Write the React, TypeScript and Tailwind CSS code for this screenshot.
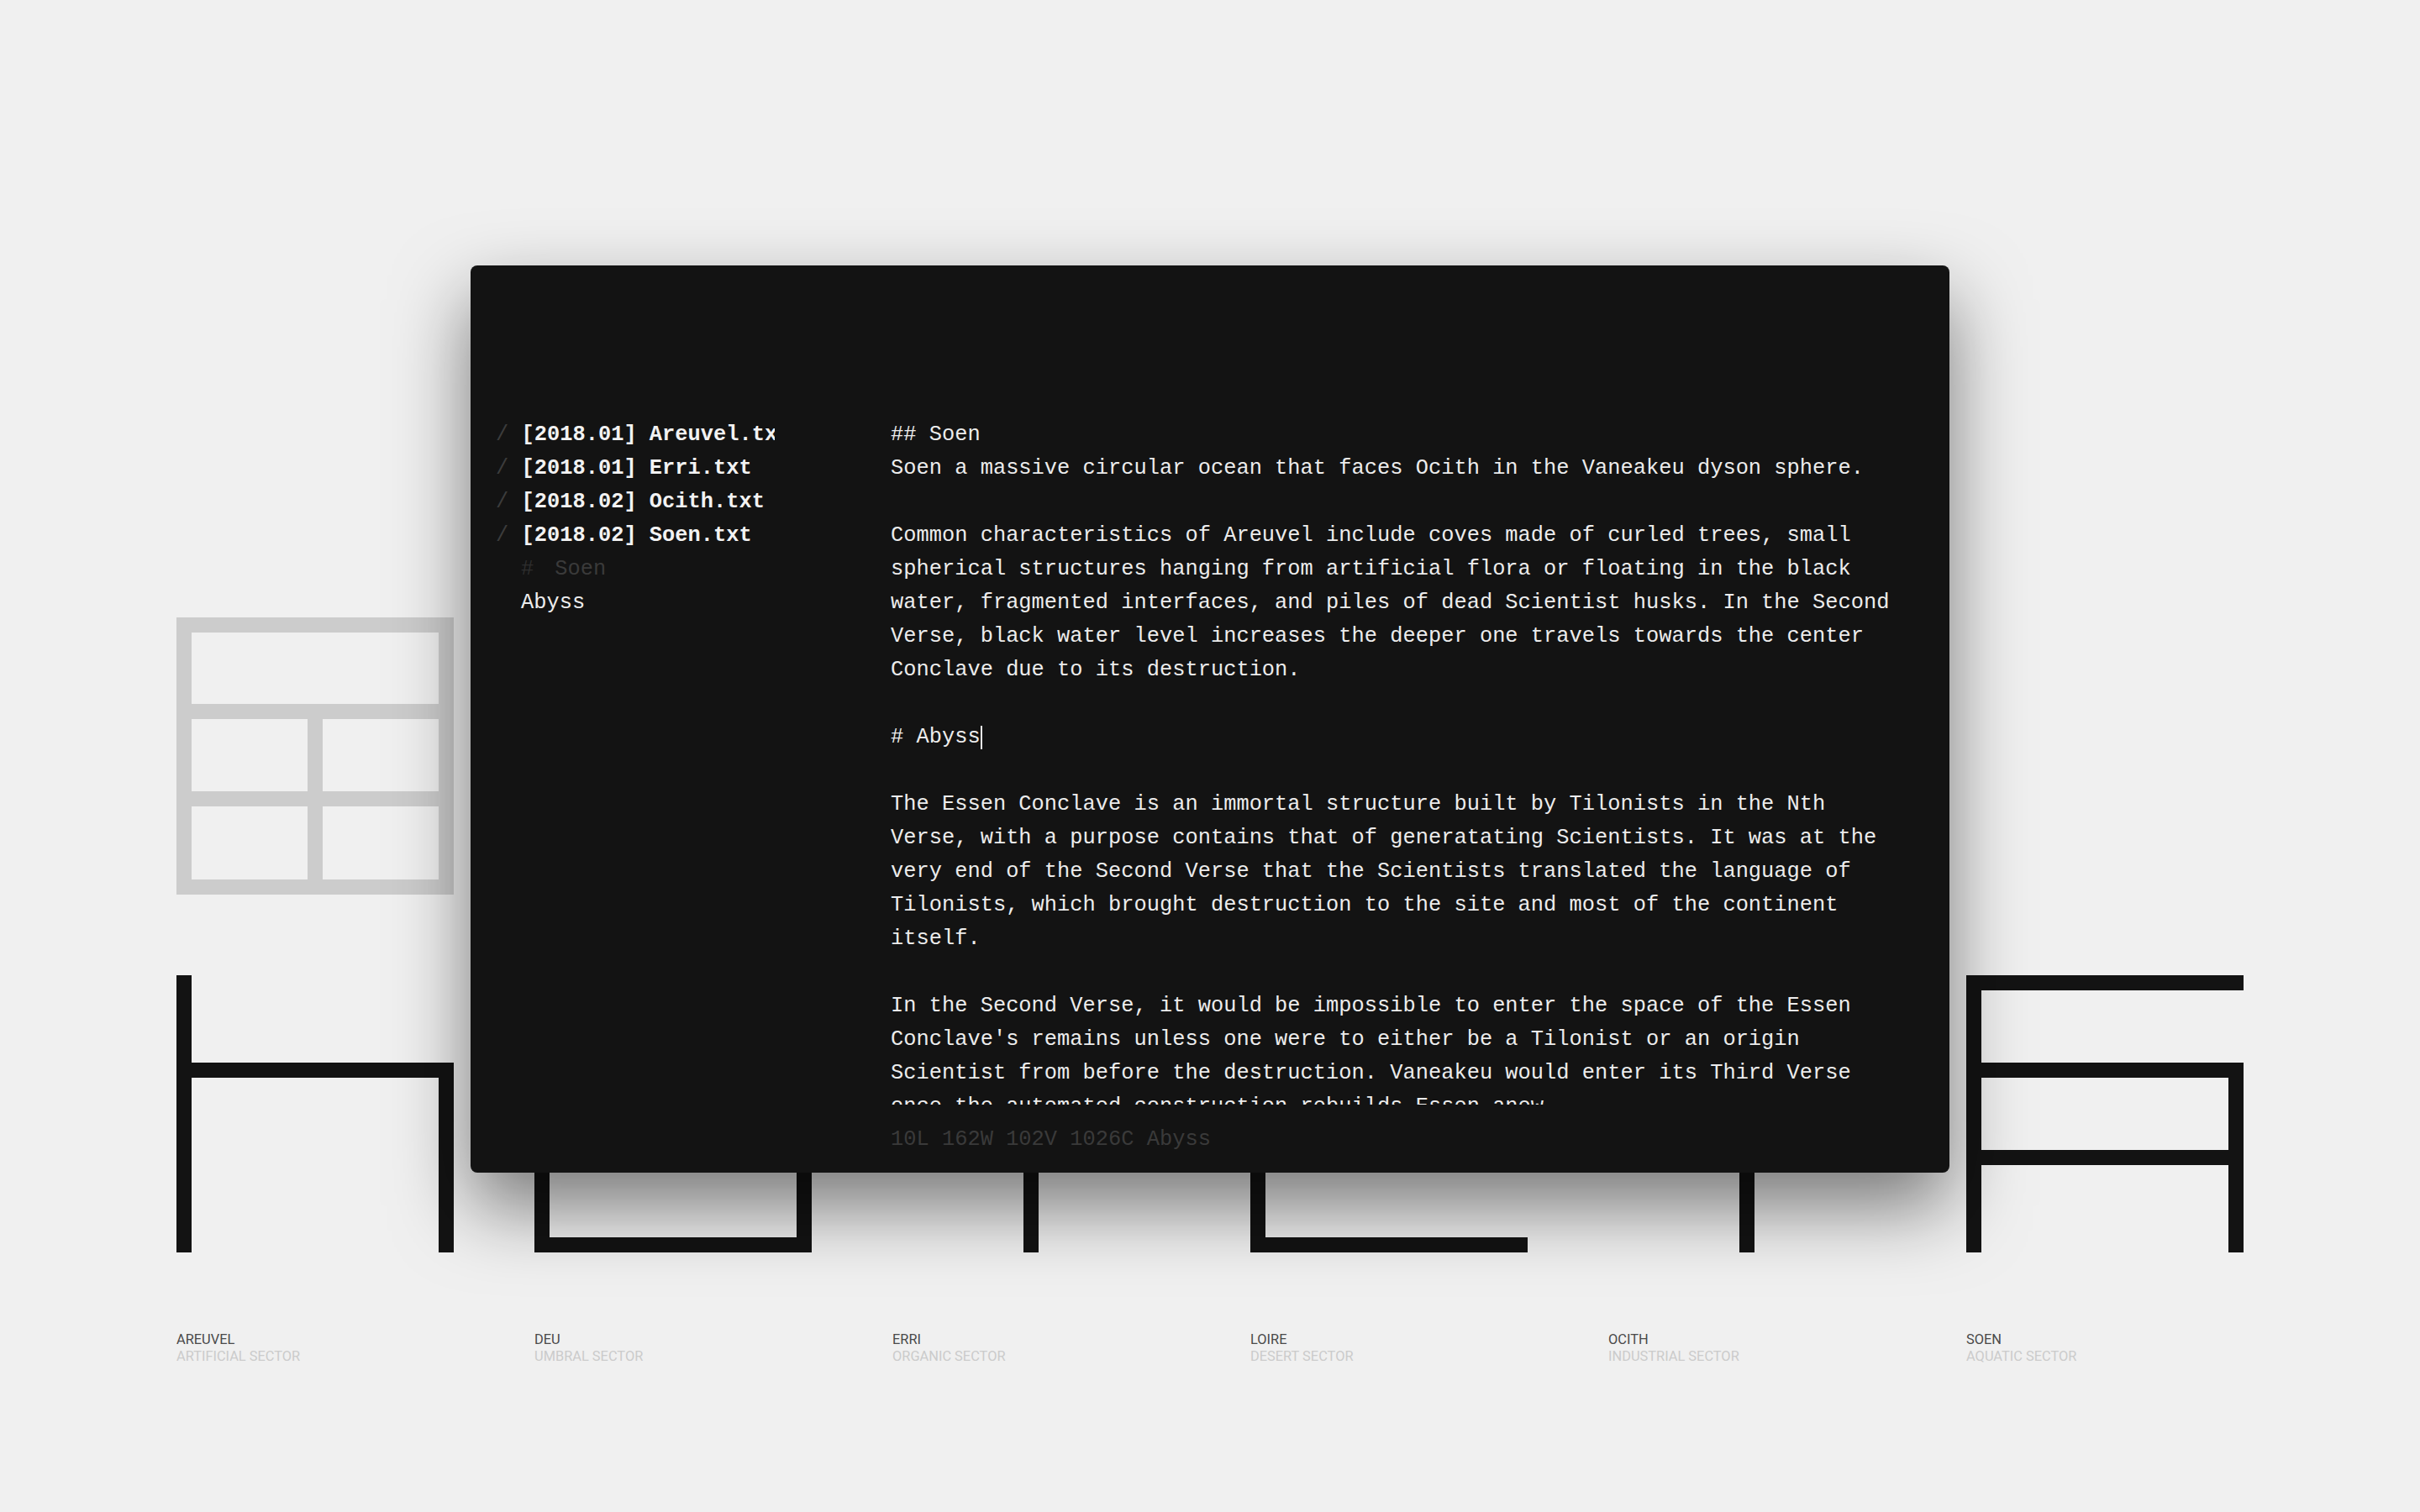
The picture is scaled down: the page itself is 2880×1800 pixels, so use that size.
import React from "react";

const S = 18;

type R = [number, number, number, number];

function Glyph({ rects, color }: { rects: R[]; color: string }) {
  return (
    <svg width="330" height="330" viewBox="0 0 330 330" className="block">
      {rects.map((r, i) => (
        <rect key={i} x={r[0]} y={r[1]} width={r[2]} height={r[3]} fill={color} />
      ))}
    </svg>
  );
}

const gridGlyph: R[] = [
  [0, 0, 330, S],
  [0, 0, S, 330],
  [312, 0, S, 330],
  [0, 312, 330, S],
  [0, 103, 330, S],
  [0, 207, 330, S],
  [156, 103, S, 227],
];

const glyphs: R[][] = [
  // h
  [
    [0, 0, S, 330],
    [0, 104, 330, S],
    [312, 104, S, 226],
  ],
  // o box
  [
    [0, 104, 330, S],
    [0, 104, S, 226],
    [312, 104, S, 226],
    [0, 312, 330, S],
  ],
  // i
  [[156, 104, S, 226]],
  // L
  [
    [0, 0, S, 330],
    [0, 312, 330, S],
  ],
  // i
  [[156, 104, S, 226]],
  // soen
  [
    [0, 0, S, 330],
    [0, 0, 330, S],
    [0, 104, 330, S],
    [0, 208, 330, S],
    [312, 104, S, 226],
  ],
];

const labels = [
  ["AREUVEL", "ARTIFICIAL SECTOR"],
  ["DEU", "UMBRAL SECTOR"],
  ["ERRI", "ORGANIC SECTOR"],
  ["LOIRE", "DESERT SECTOR"],
  ["OCITH", "INDUSTRIAL SECTOR"],
  ["SOEN", "AQUATIC SECTOR"],
];

const files = [
  "[2018.01] Areuvel.txt",
  "[2018.01] Erri.txt",
  "[2018.02] Ocith.txt",
  "[2018.02] Soen.txt",
];

const paragraphs: (string | null)[] = [
  "## Soen",
  "Soen a massive circular ocean that faces Ocith in the Vaneakeu dyson sphere.",
  "",
  "Common characteristics of Areuvel include coves made of curled trees, small spherical structures hanging from artificial flora or floating in the black water, fragmented interfaces, and piles of dead Scientist husks. In the Second Verse, black water level increases the deeper one travels towards the center Conclave due to its destruction.",
  "",
  null,
  "",
  "The Essen Conclave is an immortal structure built by Tilonists in the Nth Verse, with a purpose contains that of generatating Scientists. It was at the very end of the Second Verse that the Scientists translated the language of Tilonists, which brought destruction to the site and most of the continent itself.",
  "",
  "In the Second Verse, it would be impossible to enter the space of the Essen Conclave's remains unless one were to either be a Tilonist or an origin Scientist from before the destruction. Vaneakeu would enter its Third Verse once the automated construction rebuilds Essen anew.",
];

const mono = "font-['Liberation_Mono','DejaVu_Sans_Mono',monospace]";

export default function App() {
  return (
    <div className="relative w-full h-[1800px] bg-[#f0f0f0] overflow-hidden">
      {/* glyph showcase */}
      <div className="flex flex-col items-center pt-[735px]">
        <div className="flex gap-[96px]">
          {glyphs.map((_, i) => (
            <div key={i} className="w-[330px] h-[330px]">
              {i === 0 && <Glyph rects={gridGlyph} color="#cccccc" />}
            </div>
          ))}
        </div>
        <div className="flex gap-[96px] mt-[96px]">
          {glyphs.map((g, i) => (
            <Glyph key={i} rects={g} color="#131313" />
          ))}
        </div>
        <div className="flex gap-[96px] mt-[94px] font-['Roboto','Liberation_Sans',sans-serif] text-[16.4px] leading-[20px]">
          {labels.map(([a, b]) => (
            <div key={a} className="w-[330px]">
              <div className="text-[#4a4a4a]">{a}</div>
              <div className="text-[#cbcbcb]">{b}</div>
            </div>
          ))}
        </div>
      </div>

      {/* editor window */}
      <div
        className={`absolute left-[560px] top-[316px] w-[1760px] h-[1080px] rounded-[8px] bg-[#131313] shadow-[0_40px_90px_rgba(0,0,0,0.5)] flex pt-[182px] ${mono} text-[25.4px] leading-[40px]`}
      >
        <div className="ml-[30px] w-[332px] overflow-hidden whitespace-pre">
          {files.map((f) => (
            <div key={f} className="flex">
              <span className="text-[#3c3c3c]">/ </span>
              <span className="font-bold text-[#f2f2f2]">{f}</span>
            </div>
          ))}
          <div className="pl-[30px] flex">
            <span className="text-[#2e2e2e]">#</span>
            <span className="ml-[25px] text-[#3a3a3a]">Soen</span>
          </div>
          <div className="pl-[30px] text-[#ececec]">Abyss</div>
        </div>

        <div className="ml-[138px] w-[1200px] flex flex-col">
          <div className="h-[817px] overflow-hidden text-[#ececec]">
            {paragraphs.map((p, i) =>
              p === null ? (
                <div key={i} className="flex items-center">
                  <span className="whitespace-pre"># Abyss</span>
                  <span className="inline-block w-[2px] h-[28px] bg-[#ececec]" />
                </div>
              ) : p === "" ? (
                <div key={i} className="h-[40px]" />
              ) : (
                <div key={i}>{p}</div>
              )
            )}
          </div>
          <div className="mt-[22px] text-[#3a3a3a]">10L 162W 102V 1026C Abyss</div>
        </div>
      </div>
    </div>
  );
}
